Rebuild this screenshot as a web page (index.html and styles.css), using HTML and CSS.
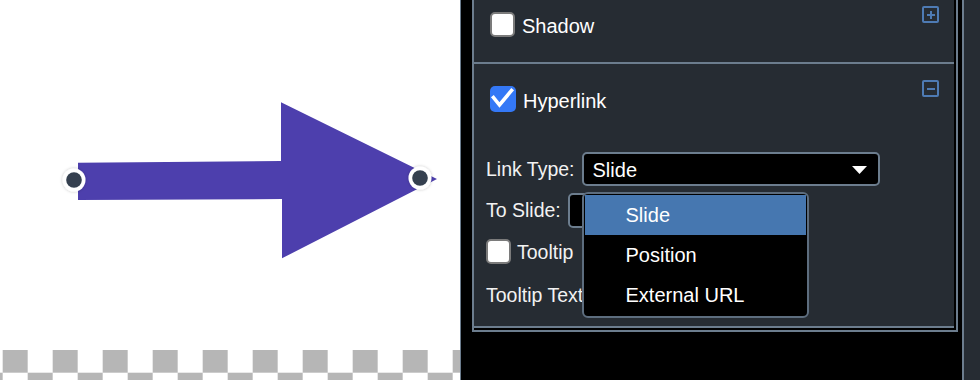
FILE: index.html
```html
<!DOCTYPE html>
<html lang="en">
<head>
  <meta charset="UTF-8" />
  <title>Shape Properties</title>
  <meta name="viewport" content="width=device-width, initial-scale=1" />
  <link rel="stylesheet" href="styles.css">
</head>
<body>
  <div class="app">
    <!-- Canvas with the selected arrow -->
    <div class="canvas">
      <svg class="stage" width="460" height="350" viewBox="0 0 460 350">
        <defs>
          <filter id="halo" x="-50%" y="-50%" width="200%" height="200%">
            <feDropShadow dx="0" dy="0" stdDeviation="1.6" flood-color="#000" flood-opacity="0.25" />
          </filter>
        </defs>
        <polygon class="arrow" points="78,162.7 281,161 281,102.3 437,179 282,258.3 282,199 78,200" />
        <g class="handle" filter="url(#halo)">
          <circle cx="74" cy="180" r="11.5" fill="#fff" />
          <circle cx="74" cy="180" r="7.8" fill="#34414f" />
        </g>
        <g class="handle" filter="url(#halo)">
          <circle cx="420" cy="178" r="11.5" fill="#fff" />
          <circle cx="420" cy="178" r="7.8" fill="#34414f" />
        </g>
      </svg>
      <div class="checker"></div>
    </div>

    <!-- Properties panel -->
    <div class="panel">
      <div class="props">
        <section class="group shadow-group">
          <div class="group-head">
            <label class="check-row">
              <span class="box"></span>
              <span class="head-label">Shadow</span>
            </label>
            <span class="toggle"><span class="bar"></span><span class="bar vert"></span></span>
          </div>
        </section>

        <section class="group">
          <div class="group-head">
            <label class="check-row">
              <span class="box checked">
                <svg width="26" height="26" viewBox="0 0 26 26"><polyline points="3.5,11.5 9.5,19 21.5,4.5" fill="none" stroke="#fff" stroke-width="3.6" stroke-linecap="square" /></svg>
              </span>
              <span class="head-label">Hyperlink</span>
            </label>
            <span class="toggle"><span class="bar"></span></span>
          </div>
          <div class="group-body">
            <div class="field field-type">
              <span class="field-label">Link Type:</span>
              <div class="select-wrap">
                <div class="select">
                  <span>Slide</span>
                  <svg width="15" height="8" viewBox="0 0 15 8"><polygon points="0,0 15,0 7.5,8" fill="#fff" /></svg>
                </div>
                <ul class="menu">
                  <li class="active">Slide</li>
                  <li>Position</li>
                  <li>External URL</li>
                </ul>
              </div>
            </div>
            <div class="field field-slide">
              <span class="field-label">To Slide:</span>
              <div class="text-input"></div>
            </div>
            <div class="field field-tip">
              <label class="check-row small">
                <span class="box"></span>
                <span class="field-label">Tooltip</span>
              </label>
            </div>
            <div class="field field-tiptext">
              <span class="field-label">Tooltip Text:</span>
              <div class="text-input"></div>
            </div>
          </div>
        </section>
      </div>
      <div class="scroll"></div>
    </div>
  </div>
</body>
</html>
```

FILE: styles.css
```css
body {
  margin: 0;
  width: 980px;
  height: 380px;
  overflow: hidden;
  font-family: 'Liberation Sans', Arial, sans-serif;
  background: #fff;
}
.app {
  display: flex;
  height: 380px;
}
.canvas {
  width: 460px;
  display: flex;
  flex-direction: column;
  background: #fff;
}
.stage { display: block; }
.arrow { fill: #4d3fad; }
.checker {
  height: 30px;
  background-image: conic-gradient(transparent 90deg, #b6b6b6 90deg 180deg, transparent 180deg 270deg, #b6b6b6 270deg);
  background-size: 50px 45.4px;
  background-position: 2.7px 0;
}
.panel {
  width: 520px;
  height: 380px;
  box-sizing: border-box;
  background: #000;
  border-left: 1px solid #6c7d8e;
  padding-left: 11px;
  display: flex;
  align-items: flex-start;
}
.props {
  width: 486px;
  box-sizing: border-box;
  margin-top: -12px;
  border: 2px solid #6c7d8e;
  padding: 0 2px 2px 0;
  background: #000;
}
.scroll {
  align-self: stretch;
  flex: 1;
  margin-left: 4px;
  background: #262c33;
  border-left: 2px solid #6c7d8e;
}
.group {
  background: #262c33;
  border-bottom: 2px solid #6c7d8e;
  color: #fff;
}
.shadow-group { padding-bottom: 25px; }
.group-head {
  display: flex;
  justify-content: space-between;
  align-items: flex-start;
  padding: 16px 15px 0 16px;
}
.check-row {
  display: flex;
  align-items: center;
  gap: 7px;
  margin-top: 6px;
}
.check-row.small { margin-top: 0; gap: 6px; }
.box {
  width: 25px;
  height: 25px;
  box-sizing: border-box;
  border-radius: 5px;
  background: #fff;
  border: 2px solid #7b7b7b;
  display: flex;
  align-items: center;
  justify-content: center;
}
.box.checked {
  background: #3478f6;
  border: none;
  width: 26px;
  height: 26px;
}
.head-label {
  font-size: 20px;
  line-height: 21px;
  padding-top: 4px;
}
.toggle {
  width: 17px;
  height: 17px;
  box-sizing: border-box;
  border: 2px solid #4e7bb4;
  border-radius: 2px;
  position: relative;
}
.toggle .bar {
  position: absolute;
  left: 2.5px;
  top: 5.5px;
  width: 8px;
  height: 2px;
  background: #4e7bb4;
}
.toggle .bar.vert {
  left: 5.5px;
  top: 2.5px;
  width: 2px;
  height: 8px;
}
.group-body {
  padding: 0 0 13px 12px;
}
.field {
  display: flex;
  align-items: center;
}
.field-label {
  font-size: 19.5px;
  color: #f2f2f2;
  white-space: nowrap;
}
.field-type { margin-top: 40px; height: 34px; gap: 7px; }
.field-slide { margin-top: 7px; height: 35px; gap: 7px; }
.field-tip { margin-top: 11px; height: 25px; }
.field-tip .field-label { padding-top: 2px; }
.field-tiptext { margin-top: 14px; height: 35px; gap: 8px; }
.select-wrap { position: relative; }
.select {
  width: 298px;
  height: 34px;
  box-sizing: border-box;
  background: #000;
  border: 2px solid #6c7d8e;
  border-radius: 5px;
  display: flex;
  align-items: center;
  justify-content: space-between;
  padding: 2px 11px 0 9px;
  font-size: 20px;
  color: #fff;
}
.text-input {
  width: 200px;
  height: 35px;
  box-sizing: border-box;
  background: #000;
  border: 2px solid #6c7d8e;
  border-radius: 5px;
}
.menu {
  position: absolute;
  top: 40px;
  left: 0;
  width: 227px;
  box-sizing: border-box;
  margin: 0;
  padding: 1px 1px;
  list-style: none;
  background: #000;
  border: 2px solid #5d6d7e;
  border-radius: 6px;
  z-index: 5;
}
.menu li {
  height: 40px;
  line-height: 41px;
  padding-left: 41px;
  font-size: 20px;
  color: #fff;
}
.menu li.active { background: #4677b0; }
```
